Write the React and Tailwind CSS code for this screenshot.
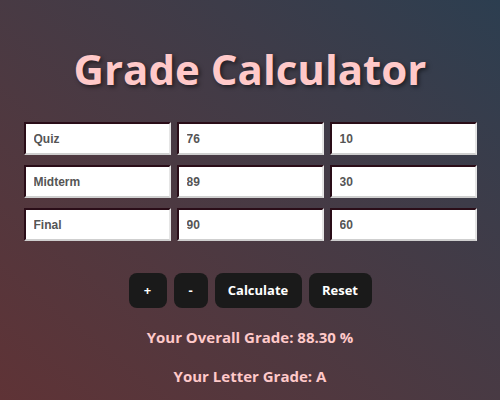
import React, { useState } from 'react';

const rows = [
  { name: 'Quiz', score: '76', weight: '10' },
  { name: 'Midterm', score: '89', weight: '30' },
  { name: 'Final', score: '90', weight: '60' },
];

const inputCls =
  "w-[147px] h-[33px] bg-white border-2 border-t-[#2a0d18] border-l-[#2a0d18] border-b-[#cfcfcf] border-r-[#e5e5e5] px-2 text-[12px] font-bold text-[#555] outline-none font-['Liberation_Sans',Arial,sans-serif]";

const btnCls =
  "h-[35px] rounded-lg bg-[#1a1a1a] text-white text-[13px] font-bold";

const App = () => {
  const [items] = useState(rows);

  return (
    <div className="min-h-screen w-full bg-gradient-to-tr from-[#5f3336] to-[#2c3e50] flex flex-col items-center font-['Open_Sans',sans-serif] pt-[48px]">
      {/* Title */}
      <h1 className="text-[42px] leading-[42px] font-bold text-[#ffc9c9] [text-shadow:2px_2px_4px_rgba(0,0,0,0.5)]">
        Grade Calculator
      </h1>

      {/* Inputs */}
      <div className="mt-[32px] flex flex-col gap-[10px]">
        {items.map((r) => (
          <div key={r.name} className="flex gap-[6px]">
            <input className={inputCls} defaultValue={r.name} />
            <input className={inputCls} defaultValue={r.score} />
            <input className={inputCls} defaultValue={r.weight} />
          </div>
        ))}
      </div>

      {/* Buttons */}
      <div className="mt-[32px] flex gap-[7px]">
        <button className={`${btnCls} w-[38px]`}>+</button>
        <button className={`${btnCls} w-[34px]`}>-</button>
        <button className={`${btnCls} w-[87px]`}>Calculate</button>
        <button className={`${btnCls} w-[63px]`}>Reset</button>
      </div>

      {/* Results */}
      <p className="mt-[18px] text-[15px] font-bold text-[#ffc9c9]">Your Overall Grade: 88.30 %</p>
      <p className="mt-[16px] text-[15px] font-bold text-[#ffc9c9]">Your Letter Grade: A</p>
    </div>
  );
};

export default App;
